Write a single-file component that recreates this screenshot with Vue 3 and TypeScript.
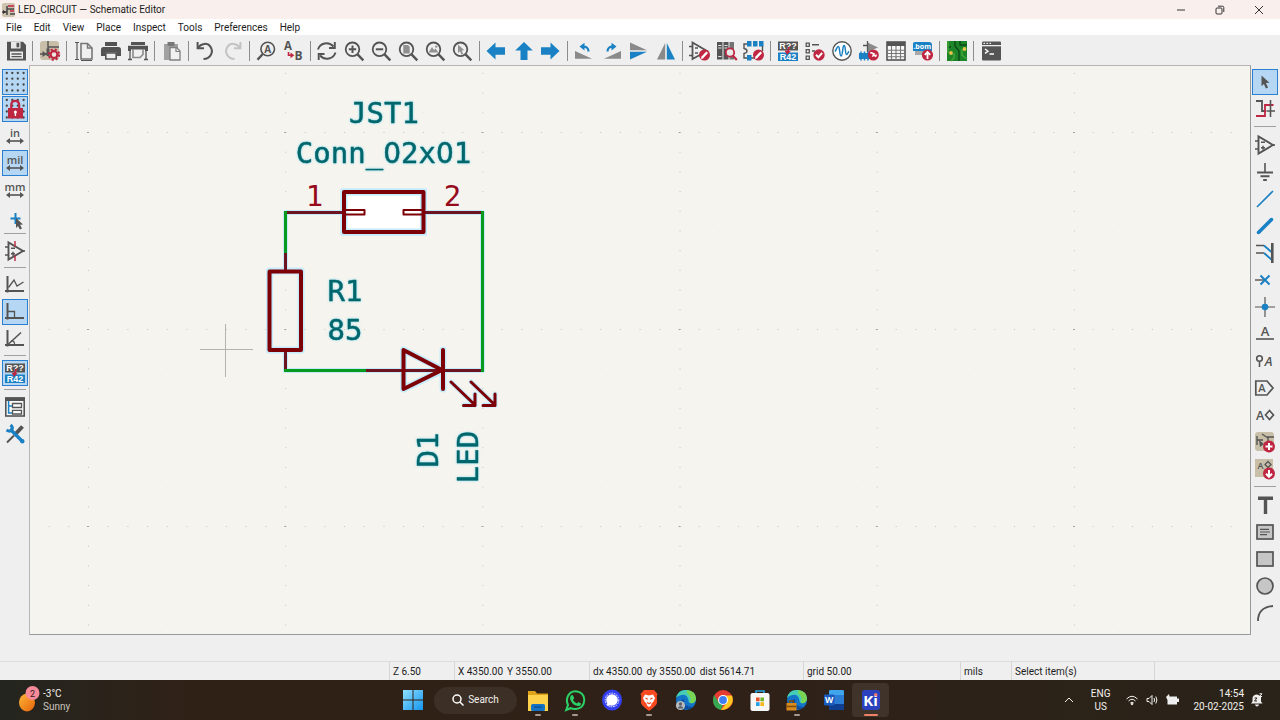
<script setup lang="ts">
interface Tool {
  icon: string
  label: string
  active?: boolean
}
type Entry = Tool | null

const DK = '#545454'
const BL = '#1a81c4'
const RD = '#bf2641'
const GR = '#8a8a8a'

const line = (d: string, color = DK, width = 2): string =>
  `<path d="${d}" fill="none" stroke="${color}" stroke-width="${width}"/>`
const fill = (d: string, color = DK): string => `<path d="${d}" fill="${color}"/>`
const word = (x: number, y: number, size: number, color: string, text: string, weight = 700, family = 'Open Sans'): string =>
  `<text x="${x}" y="${y}" font-size="${size}" font-weight="${weight}" fill="${color}" text-anchor="middle" font-family="${family}, Liberation Sans, sans-serif">${text}</text>`
const disc = (x: number, y: number, r: number, color = RD): string => `<circle cx="${x}" cy="${y}" r="${r}" fill="${color}"/>`

const editBadge = disc(14.5, 14, 5.5) + line('M12 16.8L17.2 11.2', '#fff', 2.4) + fill('M11 18l.6-2.4 1.8 1.7z', '#fff')
const lens = `<circle cx="7.5" cy="8.3" r="6.8" fill="none" stroke="${DK}" stroke-width="1.8"/>` + line('M12.3 13.2L18.3 19.3', DK, 2.4)
const dots = (rows: number[]): string =>
  rows.flatMap((y) => [1.8, 7.3, 12.8, 18.6].map((x) => disc(x, y, 1.15, '#454545'))).join('')
const spread = line('M3 15H17', DK, 1.6) + fill('M1 15L5 12v6zM19 15L15 12v6z')
const annotate =
  fill('M0 .5H20V9.5H0z') + fill('M0 11.5H20V20H0z', BL) +
  word(10, 8, 9, '#fff', 'R??', 700, 'Liberation Sans') + word(10, 19.2, 9, '#fff', 'R42', 700, 'Liberation Sans') +
  line('M11 6L9.6 11', RD, 1.8) + fill('M6.5 9.5L12.8 10.2 9 13.8z', RD)
const axes = line('M2.5 1V17.5M0 16H19', DK, 2)
const gear =
  `<circle cx="14" cy="13.6" r="3.4" fill="#ece5df" stroke="${RD}" stroke-width="2.2"/><circle cx="14" cy="13.6" r="5.2" fill="none" stroke="${RD}" stroke-width="2" stroke-dasharray="2.1 2"/>`
const sheet =
  '<rect x="0" y="0" width="19" height="19" rx="3" fill="#c9bfa9"/>'
const opamp = line('M3.5 1.5V18.5L18 10z', DK, 1.9) + line('M0 6H3.5M0 14H3.5M17 10H20M6 7.3H10M6 12.7H10M8 10.7V14.7', DK, 1.5)

const icons: Record<string, string> = {
  save: fill('M1 .8H17L20 4V19.6H1z') + fill('M5 .8H14.5V7.5H5z', '#e9e9e9') + fill('M10.5 1.8H13.2V6.3H10.5z') + fill('M4 10.5H17V17.7H4z', '#e9e9e9') + line('M5.5 13H15.5M5.5 15.6H15.5', DK, 1.4),
  setup: sheet + line('M8 0V12M8 6H19M0 13H8', DK, 1.4) + fill('M2.5 10L7 13 2.5 16z') + fill('M6.5 7.5H9.5V15H6.5z') + gear,
  page: line('M7 2.5H13.5L18 7V18H7z', '#777', 1.6) + line('M13.5 2.5V7H18', '#777', 1.4) + line('M3 1.5V18.5M1 1.5H5M1 18.5H5M7 19.5H18', '#555', 1.2),
  print: fill('M4 1H16V5H4z') + fill('M2.5 6H17.5Q20 6 20 8.5V15H16V11.5H4V15H0V8.5Q0 6 2.5 6z') + line('M4.8 12H15.2V18H4.8z', DK, 1.6),
  plot: fill('M3 1H17V4H3z') + fill('M0 4.8H20V10H17V8.5H3V10H0z') + line('M5 8V16.5H12L15 13.5V8', GR, 1.6) + line('M2 10V19M18 10V19M0 18.5H4M16 18.5H20', DK, 1.3),
  paste: fill('M2 3H16V19H2z', '#a2a2a2') + fill('M5.5 1H12.5V5H5.5z', '#777') + '<path d="M8 6.5H14.5L18 10V19H8z" fill="#f1f1f1" stroke="#808080" stroke-width="1.3"/>' + line('M14 6.5V10.5H18', '#808080', 1.2),
  undo: line('M1.6 1V7.3H8', DK, 2) + line('M2.2 6.8C5 2 11.5 1.6 14.4 5.6C18 11 14.5 17.8 7.5 18', DK, 2),
  redo: line('M17.4 1V7.3H11', '#c3c3c3', 2) + line('M16.8 6.8C14 2 7.5 1.6 4.6 5.6C1 11 4.5 17.8 11.5 18', '#c3c3c3', 2),
  find: `<circle cx="10.7" cy="8" r="6.8" fill="none" stroke="${DK}" stroke-width="1.6"/>` + line('M5.8 13L.5 18.8', DK, 2.4) + word(10.7, 11.8, 10, DK, 'A'),
  replace: word(4, 9.2, 11.5, DK, 'A') + word(14.6, 19.4, 12, DK, 'B') + line('M4.5 11V14.3H7', RD, 1.6) + fill('M6.5 11.5L10.3 14.3 6.5 17.3z', RD),
  refresh: line('M0 8.5C2 2 10.5 0 15.5 5.5', DK, 1.9) + line('M16.8 1V7H11', DK, 1.9) + line('M17.5 11.5C15.5 18 7 20 2 14.5', DK, 1.9) + line('M.7 19V13H6.5', DK, 1.9),
  zoomIn: lens + line('M7.5 4.5V12M3.8 8.3H11.2', DK, 2),
  zoomOut: lens + line('M3.8 8.3H11.2', DK, 2),
  zoomFit: lens + fill('M4.3 4H9L10.7 5.8V12.5H4.3z', '#8f8f8f'),
  zoomObjects: lens + fill('M2.5 11.5L6 6 8 9 9.5 7.5 12.5 11.5z', '#929292') + disc(10.2, 5.6, 1.2, '#929292'),
  zoomSelection: lens + fill('M5 3.5L11.3 9.3 8.6 9.5 10.2 12.8 8.5 13.5 7 10.3 5 12z', '#929292'),
  left: fill('M-.5 10L8.5 1.5V6.3H18V13.7H8.5V18.5z', BL),
  up: fill('M10 1L18.8 9.5H13.5V19H6.5V9.5H1.2z', BL),
  right: fill('M18.5 10L9.5 1.5V6.3H0V13.7H9.5V18.5z', BL),
  rotateLeft: fill('M0 10L17 17.8H0z', GR) + line('M13.5 10.5C13.5 7 11.5 5.6 8 5.6', BL, 2.2) + fill('M4.5 5.6L9.5 1.8V9.4z', BL),
  rotateRight: fill('M19 10L2 17.8H19z', GR) + line('M5.5 10.5C5.5 7 7.5 5.6 11 5.6', BL, 2.2) + fill('M14.5 5.6L9.5 1.8V9.4z', BL),
  mirrorV: fill('M1 1.5L18 9.3H1z', GR) + fill('M1 10.7H18L1 18.6z', BL),
  mirrorH: fill('M9.2 2V18.6H1z', GR) + fill('M10.8 2V18.6H19z', BL),
  symbolEditor: line('M2.5 1.5V18L17 10z', DK, 1.8) + line('M-1 5.5H2.5M-1 14.5H2.5M5 7H8M5 12H8', DK, 1.4) + editBadge,
  libraryBrowser: fill('M0 1H5.5V18.5H0zM6.5 1H11.5V18.5H6.5z') + fill('M12.5 1H17V18.5H12.5z', '#737373') + line('M1.2 4.5H4.5M7.5 4.5H10.5M1.2 7H4.5M7.5 7H10.5M1.2 15.5H4.5', '#e5e5e5', 1.2) + `<circle cx="13" cy="11.5" r="4.2" fill="#e9e9e9" stroke="${RD}" stroke-width="1.8"/>` + line('M16 14.8L19.8 19', RD, 2.2),
  footprintEditor: line('M6 3H0V7.5Q3 8 3 10Q3 12 0 12.5V17H12', DK, 1.4) + fill('M3 0H7.5V5.5H3zM9 0H13.5V5.5H9zM15 0H19.5V5.5H15zM3 14H7.5V19.5H3z', BL) + line('M18.5 5V10', DK, 1.4) + editBadge,
  annotate,
  erc: line('M1.2 2.2H4.3V5.3H1.2zM1.2 8.7H4.3V11.8H1.2zM1.2 15.2H4.3V18.3H1.2z', DK, 1.3) + line('M7 3.8H14M7 10H10', DK, 1.5) + disc(14, 14, 5.7) + line('M11 13.8L13.4 16.2 17.2 11.8', '#fff', 2),
  simulator: `<circle cx="10" cy="10" r="9.2" fill="#fff" stroke="${DK}" stroke-width="1.4"/>` + line('M3 10.5C4.5 8.5 5 5 6.4 5.5C8 6 7.5 15 9 15C10.8 15 10.5 4 12.2 4.5C13.8 5 13 13.5 14.6 13.5C15.8 13.4 15.8 11 17.2 10.5', BL, 1.5),
  assign: fill('M8.5 1.5L19 6.5 8.5 11z', GR) + line('M8.5 0V11M4 4.5H8.5', DK, 1.3) + fill('M0 12H11V18H0z', BL) + line('M2 10.5V19.5M5.5 10.5V19.5M9 10.5V19.5', BL, 1.5) + disc(14.3, 14, 5.5) + line('M11.5 12.5Q12 11 14 12.5L15.5 14.5Q17.5 16.3 17 13.5M13.5 15.8L15.3 12', '#fff', 1.5),
  table: '<rect x="1" y="1" width="18" height="18" fill="#f8f8f8" stroke="#545454" stroke-width="1.6"/>' + fill('M1 1H19V5H1z') + line('M1 9.2H19M1 12.5H19M1 15.8H19M5.5 5V19M10 5V19M14.5 5V19', '#777', 1.1),
  bom: fill('M0 2.5Q0 1 2 1H16Q19 1 19 4V10H0z', BL) + fill('M2 10H18V14H2z', '#aaa') + word(9.2, 8.2, 7, '#fff', '.bom') + disc(14.5, 14, 5.6) + line('M14.5 18V11.5M11.8 13.8L14.5 11 17.2 13.8', '#fff', 1.8),
  pcb: fill('M0 0H20V20H0z', '#1d8428') + line('M8 0V5L12 10V20M13 0V4H20M0 6H4', '#0c4a18', 1.4) + line('M1 0V12M7 12V17L4 20M15 8V14L20 18', '#41a339', 1.6) + disc(4, 12, 1.9, '#e6c34a') + disc(17.5, 8, 1.9, '#e6c34a'),
  terminal: '<rect x="1" y=".5" width="19" height="19" rx="1" fill="#545454"/>' + fill('M1 4H20V5.3H1z', '#eee') + line('M2.5 2.3H4M5.5 2.3H7M8.5 2.3H10', '#eee', 1.2) + line('M4 8L7 10.2 4 12.4M8.5 13H13', '#fff', 1.4),

  grid: dots([1, 6.7, 12.5, 18.5]),
  gridLock: dots([1, 6.7, 12.5, 18.5]) + line('M6.2 9V6.5Q6.2 1.8 10.2 1.8Q14.2 1.8 14.2 6.5V9', RD, 2.2) + fill('M3 9H18V19.5H3z', RD) + disc(10.4, 13, 1.5, '#fff') + fill('M9.7 13H11.1V17H9.7z', '#fff'),
  inch: word(10, 11, 11, DK, 'in', 600) + spread,
  mil: word(10, 11, 11, DK, 'mil', 600) + spread,
  mm: word(10, 11, 11, DK, 'mm', 600) + spread,
  cursor: line('M10.5 6V17M5.5 11.5H15.5', BL, 2) + fill('M11 11L18 17.6 15 17.8 17 21.5 14.8 22.5 13 19 11 21z'),
  hiddenPins: opamp + line('M10 0V5.5M10 14.5V20', RD, 1.4),
  freeAngle: axes + line('M3.5 12.5L9 5 12 11 18.5 7', DK, 1.3),
  rightAngle: axes + line('M3 9.5H9.5V16', DK, 1.3),
  diagonal: axes + line('M3 15.5L16 3.5', DK, 1.6) + line('M6 12Q10 11.5 9.5 16', DK, 1.2),
  hierarchy: '<rect x=".8" y="1" width="18.4" height="18" fill="#fafafa" stroke="#545454" stroke-width="1.6"/>' + fill('M0 .5H20V4H0z') + line('M3.6 4V16H7M3.6 9H7', BL, 1.5) + line('M7.5 6.5H16.5V10.5H7.5zM7.5 13.3H16.5V17H7.5z', DK, 1.3),
  tools: line('M2 18.5L9 11.5', DK, 2) + line('M10.5 10L17.5 2.5', DK, 4) + line('M5 5L17.5 17.5', BL, 3.4) + line('M1.5 6Q5.5 8.5 7 5.5Q8.2 3 5.5 1', BL, 3) + disc(17.3, 17.3, 2.2, BL),

  pointer: fill('M6.5 3.5L14.5 10.8 10.9 11.1 13.1 15.6 10.9 16.6 8.9 12.1 6.5 14.3z'),
  highlightNet: line('M1 2H7V12H11', DK, 1.8) + line('M1 17H10V6H18.5', RD, 1.8) + line('M15.5 1V18M11.5 12H20', DK, 1.6),
  symbol: opamp,
  power: line('M10 1V10', DK, 1.6) + line('M2 10.5H18M5.5 14.3H14.5M8.2 18H11.8', DK, 2),
  wire: line('M2 18L18 2', BL, 1.6),
  bus: line('M3.5 16.5L16.5 3.5', BL, 3.6) + disc(3.5, 16.5, 1.8, BL) + disc(16.5, 3.5, 1.8, BL),
  busEntry: line('M1 2.5H9M1 10H9', DK, 1.7) + line('M9 2.5L17 9.5M9 10L17 17', BL, 1.9) + line('M17.3 0V20', DK, 2.6),
  noConnect: line('M0 10H9', DK, 1.4) + line('M5.5 5.5L14.5 14.5M14.5 5.5L5.5 14.5', BL, 2),
  junction: line('M10 0V20M0 10H20', DK, 1.2) + disc(10, 10, 3.3, BL),
  label: word(10, 12, 13, DK, 'A', 600) + line('M1 15H19', DK, 1.6),
  netClass: `<circle cx="4.5" cy="7.5" r="2.8" fill="none" stroke="${DK}" stroke-width="1.6"/>` + line('M4.5 10.5V16', DK, 1.6) + `<g font-style="italic">${word(13.5, 14.5, 13, DK, 'A', 600)}</g>`,
  globalLabel: line('M.8 3H12L18 10 12 17H.8z', DK, 1.7) + word(6.8, 14, 11, DK, 'A', 600),
  hierLabel: word(5.2, 14.5, 12.5, DK, 'A', 600) + line('M14.5 5.5L18.5 10 14.5 14.5 10.5 10z', DK, 1.7),
  addSheet: sheet + line('M2 4V13M2 8H8M7 2L13 6V12M12 5H19', DK, 1.4) + fill('M4 8L9 12 5 15z') + disc(14, 14.5, 6) + line('M14 11V18M10.5 14.5H17.5', '#fff', 2),
  importLabel: '<rect x="0" y="0" width="18" height="18" fill="#c9bfa9"/>' + word(5.5, 9.5, 9, DK, 'A', 600) + line('M13 2.5L16 5.5 13 8.5 10 5.5z', DK, 1.3) + disc(14, 14.5, 6) + line('M14 11V17M11 14.8L14 17.8 17 14.8', '#fff', 2),
  text: fill('M3 1.5H18V5H12.2V19H8.8V5H3z'),
  textBox: '<rect x="2" y="3" width="16" height="14" fill="#c6c6c6" stroke="#545454" stroke-width="1.7"/>' + line('M5 7.3H14M5 10H15M5 12.7H12', DK, 1.2),
  rectangle: '<rect x="2" y="3" width="16" height="14" fill="#c6c6c6" stroke="#545454" stroke-width="1.7"/>',
  circle: '<circle cx="10" cy="10" r="8" fill="#c6c6c6" stroke="#545454" stroke-width="1.7"/>',
  arc: line('M3 18Q3 4 18 3', DK, 1.8),

  explorer: fill('M0 1H7L9 3.5H20V21H0z', '#e0a41b') + fill('M0 5H20V21H0z', '#ffd24c') + '<rect x="3" y="14" width="14" height="7" rx="1.5" fill="#1673c4"/>' + line('M6 17H14', '#0b4f94', 1.4),
  whatsapp: line('M1.2 20L3 15Q1 11 2.5 7Q5 1 10.8 1.2Q19 2 19.3 10Q19 18 11 19Q8 19.2 5.6 18.2z', '#2bd067', 2) + fill('M6 5.5Q7.5 4.5 8.3 6L9.2 8.2 8 10Q9.5 12.6 12 13.6L13.4 12 16 13.4Q15.8 16 13 16Q6.5 15 5 8.5Q5 6.5 6 5.5z', '#2bd067'),
  signal: '<ellipse cx="10" cy="10" rx="10" ry="10.5" fill="#343ff0"/><circle cx="10" cy="10" r="5.8" fill="#fff"/><circle cx="10" cy="10" r="6.8" fill="none" stroke="#fff" stroke-width="1" stroke-dasharray="1.6 1"/>' + fill('M5 16L5.5 11 9 15z', '#fff'),
  brave: fill('M5 0H15L18.5 4 17.8 6 18 13Q17 16 10 21Q3 16 2 13L2.2 6 1.5 4z', '#fa4a22') + fill('M6 4.5L10 5.5 14 4.5 16 8 14.5 11.5 12.5 13.5 12 15.5 10 17 8 15.5 7.5 13.5 5.5 11.5 4 8z', '#fff') + line('M6.5 8L8.8 9.3M13.5 8L11.2 9.3M8 12.5L10 13.8 12 12.5', '#fa4a22', 1.3),
  edge: '<circle cx="10" cy="10" r="10" fill="#1375c8"/>' + fill('M0 8Q2 -1 11 0Q20 1 20 9Q19 14 14 13Q12 12.5 12.5 10Q11 4 5.5 5Q2 5.5 0 8z', '#45cdb5') + fill('M11 0Q20 1 20 9Q19 14 14 13Q16 7 11 3z', '#79d655') + fill('M8 9Q7 17 17 17Q12 21 7 18Q4 15 5 11Q6 9 8 9z', '#0c4ea2'),
  chrome: '<circle cx="10" cy="10" r="10" fill="#e53b30"/>' + fill('M1.3 5L6 13 10 14.5 8 20Q0 18 0 10Q0 7 1.3 5z', '#36a852') + fill('M10 5.5H19Q21 11 18 15Q14.5 20 8 20L13.5 13z', '#fcc81f') + disc(10, 10, 5, '#fff') + disc(10, 10, 3.9, '#3f7ef0'),
  store: line('M6 4V1H14V4', '#29a9e5', 1.6) + '<rect x=".5" y="3" width="19" height="18" rx="2" fill="#f7f7f7"/>' + fill('M6 7.5H9.6V11.3H6z', '#e8502a') + fill('M10.4 7.5H14V11.3H10.4z', '#71b52f') + fill('M6 12.2H9.6V16H6z', '#23a0e8') + fill('M10.4 12.2H14V16H10.4z', '#f8b71b'),
  word: '<rect x="5" y="0" width="15" height="20" rx="1.5" fill="#2b7cd3"/>' + fill('M5 1.5Q5 0 6.5 0H18.5Q20 0 20 1.5V5H5z', '#41a5ee') + fill('M5 14H20V18.5Q20 20 18.5 20H6.5Q5 20 5 18.5z', '#103f91') + '<rect x="0" y="4.5" width="10.5" height="11" rx="1" fill="#185abd"/>' + word(5.2, 13.2, 8.5, '#fff', 'W'),
  kicad: '<rect x="1" y="0" width="18" height="20" rx="3" fill="#2b41bd"/>' + word(9.6, 15.5, 15, '#fff', 'Ki') + disc(14.7, 4.6, 1.7, '#f07868'),
}
icons.edgeProfile = icons.edge + disc(4.5, 15.5, 4.6, '#b8bcc1') + disc(4.5, 14, 1.7, '#5c6269') + fill('M1.8 18.5Q2 16 4.5 16Q7 16 7.2 18.5z', '#5c6269')
icons.edgeWork = icons.edge + fill('M-.5 13H9.5V20.5H-.5z', '#d98b1e') + line('M2.5 13V11H6.5V13M0 16.5H9', '#7d4a09', 1.3)

const t = (icon: string, label: string, active = false): Tool => ({ icon, label, active })

const menus = ['File', 'Edit', 'View', 'Place', 'Inspect', 'Tools', 'Preferences', 'Help']

const topTools: Entry[] = [
  t('save', 'Save'), null,
  t('setup', 'Schematic Setup'), null,
  t('page', 'Page Settings'), t('print', 'Print'), t('plot', 'Plot'), null,
  t('paste', 'Paste'), null,
  t('undo', 'Undo'), t('redo', 'Redo'), null,
  t('find', 'Find'), t('replace', 'Find and Replace'), null,
  t('refresh', 'Refresh'), t('zoomIn', 'Zoom In'), t('zoomOut', 'Zoom Out'), t('zoomFit', 'Zoom to Fit'),
  t('zoomObjects', 'Zoom to Objects'), t('zoomSelection', 'Zoom to Selection'), null,
  t('left', 'Navigate Back'), t('up', 'Navigate Up'), t('right', 'Navigate Forward'), null,
  t('rotateLeft', 'Rotate Counterclockwise'), t('rotateRight', 'Rotate Clockwise'),
  t('mirrorV', 'Mirror Vertically'), t('mirrorH', 'Mirror Horizontally'), null,
  t('symbolEditor', 'Symbol Editor'), t('libraryBrowser', 'Symbol Library Browser'), t('footprintEditor', 'Footprint Editor'), null,
  t('annotate', 'Annotate'), t('erc', 'Electrical Rules Checker'), t('simulator', 'Simulator'),
  t('assign', 'Assign Footprints'), t('table', 'Symbol Fields Table'), t('bom', 'Bill of Materials'), null,
  t('pcb', 'Open PCB'), null,
  t('terminal', 'Scripting Console'),
]

const leftTools: Entry[] = [
  t('grid', 'Show Grid', true), t('gridLock', 'Grid Overrides', true), t('inch', 'Inches'), t('mil', 'Mils', true),
  t('mm', 'Millimeters'), t('cursor', 'Full-Window Crosshairs'), null,
  t('hiddenPins', 'Show Hidden Pins'), null,
  t('freeAngle', 'Free Angle'), t('rightAngle', '90 Degree Lines', true), t('diagonal', '45 Degree Lines'), null,
  t('annotate', 'Annotate Automatically', true), null,
  t('hierarchy', 'Hierarchy Navigator'), t('tools', 'Properties Manager'),
]

const rightTools: Entry[] = [
  t('pointer', 'Select', true), t('highlightNet', 'Highlight Net'), null,
  t('symbol', 'Add Symbol'), t('power', 'Add Power'), t('wire', 'Add Wire'), t('bus', 'Add Bus'),
  t('busEntry', 'Add Bus Entry'), t('noConnect', 'Add No Connect'), t('junction', 'Add Junction'),
  t('label', 'Add Label'), t('netClass', 'Add Net Class Directive'), t('globalLabel', 'Add Global Label'),
  t('hierLabel', 'Add Hierarchical Label'), t('addSheet', 'Add Sheet'), t('importLabel', 'Import Sheet Pin'), null,
  t('text', 'Add Text'), t('textBox', 'Add Text Box'), t('rectangle', 'Add Rectangle'),
  t('circle', 'Add Circle'), t('arc', 'Add Arc'),
]

const apps: { icon: string; label: string; state: '' | 'running' | 'current' }[] = [
  { icon: 'explorer', label: 'File Explorer', state: 'running' },
  { icon: 'whatsapp', label: 'WhatsApp', state: 'running' },
  { icon: 'signal', label: 'Signal', state: '' },
  { icon: 'brave', label: 'Brave', state: 'running' },
  { icon: 'edgeProfile', label: 'Edge', state: '' },
  { icon: 'chrome', label: 'Chrome', state: '' },
  { icon: 'store', label: 'Microsoft Store', state: '' },
  { icon: 'edgeWork', label: 'Edge Work', state: 'running' },
  { icon: 'word', label: 'Word', state: '' },
  { icon: 'kicad', label: 'KiCad', state: 'current' },
]
</script>

<template>
  <div class="desktop">
    <header class="titlebar">
      <svg class="app-icon" viewBox="0 0 13 14" aria-hidden="true">
        <rect width="13" height="14" rx="2" fill="#cdc3ae" />
        <path d="M0 9H5M5 3V12M5 6H12M8 11H13" fill="none" stroke="#4a4a4a" stroke-width="1.6" />
        <path d="M1 7L4 9 1 11z" fill="#333" />
        <path d="M6 3H12M8 8H12" stroke="#bf2641" stroke-width="1.3" />
      </svg>
      <h1>LED_CIRCUIT — Schematic Editor</h1>
      <div class="window-buttons">
        <button type="button" aria-label="Minimize"><svg viewBox="0 0 10 10"><path d="M1 5H9" /></svg></button>
        <button type="button" aria-label="Restore">
          <svg viewBox="0 0 10 10"><rect x="1" y="3" width="6" height="6" rx="1" /><path d="M3 1.2H7.5Q8.8 1.2 8.8 2.5V7" /></svg>
        </button>
        <button type="button" aria-label="Close"><svg viewBox="0 0 10 10"><path d="M1 1L9 9M9 1L1 9" /></svg></button>
      </div>
    </header>

    <nav class="menubar" aria-label="Menu">
      <button v-for="m in menus" :key="m" type="button">{{ m }}</button>
    </nav>

    <div class="toolbar top" role="toolbar" aria-label="Main">
      <template v-for="(tool, i) in topTools" :key="i">
        <button v-if="tool" type="button" class="tool" :aria-label="tool.label">
          <svg viewBox="0 0 20 20" v-html="icons[tool.icon]"></svg>
        </button>
        <span v-else class="sep"></span>
      </template>
    </div>

    <main class="workspace">
      <div class="toolbar side" role="toolbar" aria-label="Options">
        <template v-for="(tool, i) in leftTools" :key="i">
          <button v-if="tool" type="button" class="tool" :class="{ active: tool.active }" :aria-label="tool.label">
            <svg viewBox="0 0 20 20" v-html="icons[tool.icon]"></svg>
          </button>
          <span v-else class="sep"></span>
        </template>
      </div>

      <div class="canvas">
        <svg class="sheet" role="img" aria-label="LED circuit schematic">
          <defs>
            <pattern id="minor" x="58" y="66" width="19.7" height="19.7" patternUnits="userSpaceOnUse">
              <rect width="1" height="1" fill="#ecebe6" />
            </pattern>
            <pattern id="rowDots" x="58" y="66" width="19.7" height="197" patternUnits="userSpaceOnUse">
              <rect width="1" height="1" fill="#c6c5c0" />
            </pattern>
            <pattern id="columnDots" x="58" y="66" width="197.2" height="19.7" patternUnits="userSpaceOnUse">
              <rect width="1" height="1" fill="#c6c5c0" />
            </pattern>
            <pattern id="major" x="57" y="66" width="197.2" height="197" patternUnits="userSpaceOnUse">
              <rect width="2" height="1" fill="#a3a29e" />
            </pattern>
          </defs>
          <rect v-for="p in ['minor', 'rowDots', 'columnDots', 'major']" :key="p" width="100%" height="100%" :fill="`url(#${p})`" />
          <path class="crosshair" d="M170 283.5H223M195.5 258V311" />

          <g transform="translate(-30 -66)">
            <g class="halo">
              <path d="M285.5 212.5H344M425 212.5H482.5V370.5H285.5V350M285.5 271V212.5" stroke-width="5" />
              <path d="M344 192H423V232H344zM269.5 271H301V350H269.5zM403.5 350V389L443 370zM443 350V389" stroke-width="7" />
              <path d="M451 382L475 405M464 405H475V394M471 382L495 405M484 405H495V394" stroke-width="5" />
            </g>
            <rect x="344" y="192" width="79.5" height="40" fill="#fff" stroke="#c4ebfb" stroke-width="7" />
            <path class="wire" d="M285.5 253V211M482.5 211V372M284 370.5H366" />
            <path class="pin" d="M287 212.5H344M423 212.5H481M285.5 253V271M285.5 350V369M366 370.5H481" />
            <g class="body">
              <rect x="344" y="192" width="79.5" height="40" />
              <rect x="269.5" y="271.5" width="31.5" height="78.5" />
              <path d="M403.5 350V389L442 370zM443 350V389" />
              <path class="slot" d="M345 210H364.5V214.5H345M423 210H403.5V214.5H423" />
              <path class="arrow" d="M451 382L475 405M463.5 405.5H475V394M471 382L495 405M483 405.5H495V394" />
            </g>
            <g class="number" text-anchor="middle">
              <text x="314.5" y="206">1</text>
              <text x="452.5" y="206">2</text>
            </g>
            <g class="field" text-anchor="middle">
              <text x="384" y="123">JST1</text>
              <text x="383.5" y="163">Conn_<tspan class="zero">0</tspan>2x<tspan class="zero">0</tspan>1</text>
              <text x="345" y="301">R1</text>
              <text x="345" y="340">85</text>
              <text transform="translate(438 450) rotate(-90)">D1</text>
              <text transform="translate(478 457) rotate(-90)">LED</text>
            </g>
          </g>
        </svg>
      </div>

      <div class="toolbar side right" role="toolbar" aria-label="Drawing">
        <template v-for="(tool, i) in rightTools" :key="i">
          <button v-if="tool" type="button" class="tool" :class="{ active: tool.active }" :aria-label="tool.label">
            <svg viewBox="0 0 20 20" v-html="icons[tool.icon]"></svg>
          </button>
          <span v-else class="sep"></span>
        </template>
      </div>
    </main>

    <div class="messages"></div>

    <footer class="status">
      <span class="cell message"></span>
      <span class="cell zoom">Z 6.50</span>
      <span class="cell position"><span>X 4350.00</span><span>Y 3550.00</span></span>
      <span class="cell delta"><span>dx 4350.00</span><span>dy 3550.00</span><span>dist 5614.71</span></span>
      <span class="cell grid-size">grid 50.00</span>
      <span class="cell units">mils</span>
      <span class="cell hint">Select item(s)</span>
      <span class="cell rest"></span>
    </footer>

    <div class="taskbar">
      <button type="button" class="weather">
        <svg viewBox="0 0 22 26" aria-hidden="true">
          <defs>
            <linearGradient id="sun" x1="0" y1="0" x2="1" y2="1">
              <stop offset="0" stop-color="#fbb63a" />
              <stop offset="1" stop-color="#e8630a" />
            </linearGradient>
          </defs>
          <ellipse cx="9" cy="15.5" rx="8" ry="9" fill="url(#sun)" />
          <circle cx="14.5" cy="6" r="7" fill="#f78a98" />
          <text x="14.5" y="9.5" font-size="9" text-anchor="middle" fill="#3a1a1c">2</text>
        </svg>
        <span class="lines"><span>-3°C</span><span class="dim">Sunny</span></span>
      </button>

      <div class="apps">
        <button type="button" class="start" aria-label="Start">
          <svg viewBox="0 0 20 20">
            <defs>
              <linearGradient id="win" x1="0" y1="0" x2="1" y2="1">
                <stop offset="0" stop-color="#8fe0ff" />
                <stop offset="1" stop-color="#1495ee" />
              </linearGradient>
            </defs>
            <path d="M0 0H9.5V9.5H0zM10.5 0H20V9.5H10.5zM0 10.5H9.5V20H0zM10.5 10.5H20V20H10.5z" fill="url(#win)" />
          </svg>
        </button>
        <button type="button" class="search">
          <svg viewBox="0 0 12 12" aria-hidden="true"><circle cx="5" cy="5" r="4" /><path d="M8 8L11.5 11.5" /></svg>
          Search
        </button>
        <button v-for="a in apps" :key="a.label" type="button" class="app" :class="a.state" :aria-label="a.label">
          <svg viewBox="0 0 20 20" v-html="icons[a.icon]"></svg>
        </button>
      </div>

      <div class="tray">
        <button type="button" class="chevron" aria-label="Hidden icons"><svg viewBox="0 0 10 10"><path d="M1 7L5 3 9 7" /></svg></button>
        <button type="button" class="lines centered"><span>ENG</span><span>US</span></button>
        <button type="button" class="quick" aria-label="Network, volume and battery">
          <svg viewBox="0 0 12 12"><path d="M.5 5Q6 -.5 11.5 5M2.5 7Q6 3.5 9.5 7M4.3 9Q6 7.3 7.7 9" /><circle cx="6" cy="10" r=".8" fill="#fff" /></svg>
          <svg viewBox="0 0 12 12"><path d="M1 4.5H3L6 1.5V10.5L3 7.5H1zM8 4Q9.2 6 8 8M9.8 2.5Q12 6 9.8 9.5" /></svg>
          <svg viewBox="0 0 12 12"><path d="M0 3L3 0 3.5 2.5H11V4.5H13V8H11V10.5H1.5V6z" fill="#eee" stroke="none" /></svg>
        </button>
        <button type="button" class="lines clock"><span>14:54</span><span>20-02-2025</span></button>
        <button type="button" class="bell" aria-label="Notifications">
          <svg viewBox="0 0 12 14"><path d="M0 10.5L1.5 8.5V5Q2 1.5 6 1.5Q8 1.5 10 4V8.5L11.5 10.5zM4 11.5H8Q7.5 13.5 6 13.5Q4.5 13.5 4 11.5z" fill="#eee" stroke="none" /><path d="M3.5 5H6L3.5 8H6" stroke="#3a2d20" /><path d="M8.5 .8H11L8.5 3.5H11" /></svg>
        </button>
      </div>
    </div>
  </div>
</template>

<style>
body {
  margin: 0;
}
</style>

<style scoped>
.desktop {
  display: flex;
  flex-direction: column;
  min-height: 100vh;
  background: #efefef;
  color: #1c1c1c;
  font-family: Roboto, "Liberation Sans", sans-serif;
  font-size: 10px;
  line-height: 14px;
}
button {
  margin: 0;
  padding: 0;
  border: 0;
  background: none;
  color: inherit;
  font: inherit;
}
svg {
  display: block;
  overflow: visible;
}

.titlebar {
  display: flex;
  align-items: center;
  height: 19px;
  padding: 0 2px;
  background: #f9f0ed;
}
.app-icon {
  width: 13px;
  height: 14px;
}
h1 {
  flex: 1;
  margin: 0 0 0 3px;
  font-size: 10px;
  font-weight: 400;
  line-height: 16px;
}
.window-buttons {
  display: flex;
}
.window-buttons button {
  display: grid;
  place-items: center;
  width: 39px;
  height: 19px;
}
.window-buttons svg {
  width: 10px;
  height: 10px;
  fill: none;
  stroke: #333;
}

.menubar {
  display: flex;
  height: 16px;
  background: #fff;
}
.menubar button {
  padding: 2px 6px 0;
}

.toolbar {
  display: flex;
}
.tool {
  display: grid;
  place-items: center;
  flex: none;
}
.tool svg {
  width: 20px;
  height: 20px;
}
.toolbar.top {
  align-items: center;
  height: 31px;
  padding-left: 2px;
}
.top .tool {
  width: 27px;
  height: 27px;
}
.top .sep {
  width: 1px;
  height: 20px;
  margin: 0 3px;
  background: #8c8c8c;
}

.workspace {
  display: flex;
  flex: 1;
}
.toolbar.side {
  flex-direction: column;
  align-items: center;
  gap: 1px;
  width: 30px;
  padding-top: 3px;
  box-sizing: border-box;
}
.side .tool {
  width: 26px;
  height: 26px;
  box-sizing: border-box;
}
.side .tool.active {
  border: 1px solid #2a7fd0;
  background: #b5d7f3;
}
.side .sep {
  width: 22px;
  height: 1px;
  margin: 2px 0 3px;
  background: #a0a0a0;
}
.right .sep {
  margin: 3px 0 4px;
}
.canvas {
  flex: 1;
  display: flex;
  margin: -1px;
  border: 1px solid #b5b5b5;
  border-right-color: #999;
  border-bottom-color: #999;
  background: #f5f4ef;
}
.sheet {
  flex: 1;
  overflow: hidden;
}
.crosshair {
  stroke: #b4b3af;
  fill: none;
}
.halo {
  fill: none;
  stroke: #c4ebfb;
  stroke-linecap: round;
  stroke-linejoin: round;
}
.wire {
  fill: none;
  stroke: #079a1f;
  stroke-width: 3;
}
.pin {
  fill: none;
  stroke: #6e1420;
  stroke-width: 3;
}
.body {
  fill: none;
  stroke: #7d0006;
  stroke-width: 4;
  stroke-linejoin: round;
  stroke-linecap: round;
}
.slot {
  stroke-width: 2;
}
.arrow {
  stroke-width: 3;
}
.field,
.number {
  font-family: "DejaVu Sans Mono", monospace;
  font-size: 29px;
  fill: #00666b;
  stroke: #00666b;
  stroke-width: 0.4;
  stroke-linejoin: round;
}
.field {
  filter: drop-shadow(0 0 1px #7fd8f0);
}
.number {
  fill: #960a1c;
  stroke: none;
}
.zero {
  font-family: "DejaVu Sans", sans-serif;
  font-size: 28px;
}

.messages {
  height: 27px;
}
.status {
  display: flex;
  height: 19px;
  border-top: 1px solid #dcdcdc;
  box-sizing: border-box;
  line-height: 20px;
  white-space: nowrap;
}
.cell {
  display: flex;
  gap: 4px;
  padding-left: 3px;
  border-left: 1px solid #d6d6d6;
  box-sizing: border-box;
}
.message {
  flex: 1;
  border-left: 0;
}
.zoom {
  width: 65px;
}
.position {
  width: 135px;
}
.delta {
  width: 214px;
}
.grid-size {
  width: 157px;
}
.units {
  width: 51px;
}
.hint {
  width: 143px;
}
.rest {
  width: 126px;
}

.taskbar {
  display: grid;
  grid-template-columns: 1fr auto 1fr;
  align-items: center;
  height: 40px;
  background: linear-gradient(90deg, #24251f, #302116 15%, #2f2117 60%, #292319);
  color: #f4f1ee;
}
.lines {
  display: flex;
  flex-direction: column;
  align-items: flex-start;
  line-height: 13px;
}
.weather {
  display: flex;
  align-items: center;
  justify-self: start;
  gap: 3px;
  padding-left: 18px;
}
.weather svg {
  width: 22px;
  height: 26px;
}
.dim {
  color: #c9c4be;
}
.apps {
  display: flex;
  align-items: center;
  padding-left: 3px;
}
.start,
.app {
  display: grid;
  place-items: center;
  position: relative;
  width: 37px;
  height: 34px;
  border-radius: 4px;
}
.start svg,
.app svg {
  width: 20px;
  height: 20px;
}
.current {
  background: #40342a;
}
.running::after,
.current::after {
  content: "";
  position: absolute;
  bottom: 1px;
  left: 50%;
  width: 6px;
  height: 2px;
  margin-left: -3px;
  border-radius: 1px;
  background: #a39b93;
}
.current::after {
  width: 14px;
  margin-left: -7px;
  background: #ee8168;
}
.search {
  display: flex;
  align-items: center;
  justify-content: center;
  gap: 4px;
  width: 83px;
  height: 27px;
  margin: 0 2px 0 3px;
  border-radius: 14px;
  background: #3c2f26;
}
.search svg {
  width: 12px;
  height: 12px;
  fill: none;
  stroke: #fff;
  stroke-width: 1.5px;
}
.tray {
  display: flex;
  align-items: center;
  justify-self: end;
  padding-right: 17px;
}
.tray svg {
  width: 12px;
  height: 12px;
  fill: none;
  stroke: #f4f1ee;
}
.tray .chevron {
  margin-right: 17px;
}
.tray .chevron svg {
  width: 10px;
  height: 10px;
}
.centered {
  align-items: center;
}
.quick {
  display: flex;
  gap: 8px;
  margin-left: 15px;
}
.clock {
  align-items: flex-end;
  margin-left: 16px;
}
.bell {
  margin-left: 7px;
}
.tray .bell svg {
  height: 14px;
}
</style>
